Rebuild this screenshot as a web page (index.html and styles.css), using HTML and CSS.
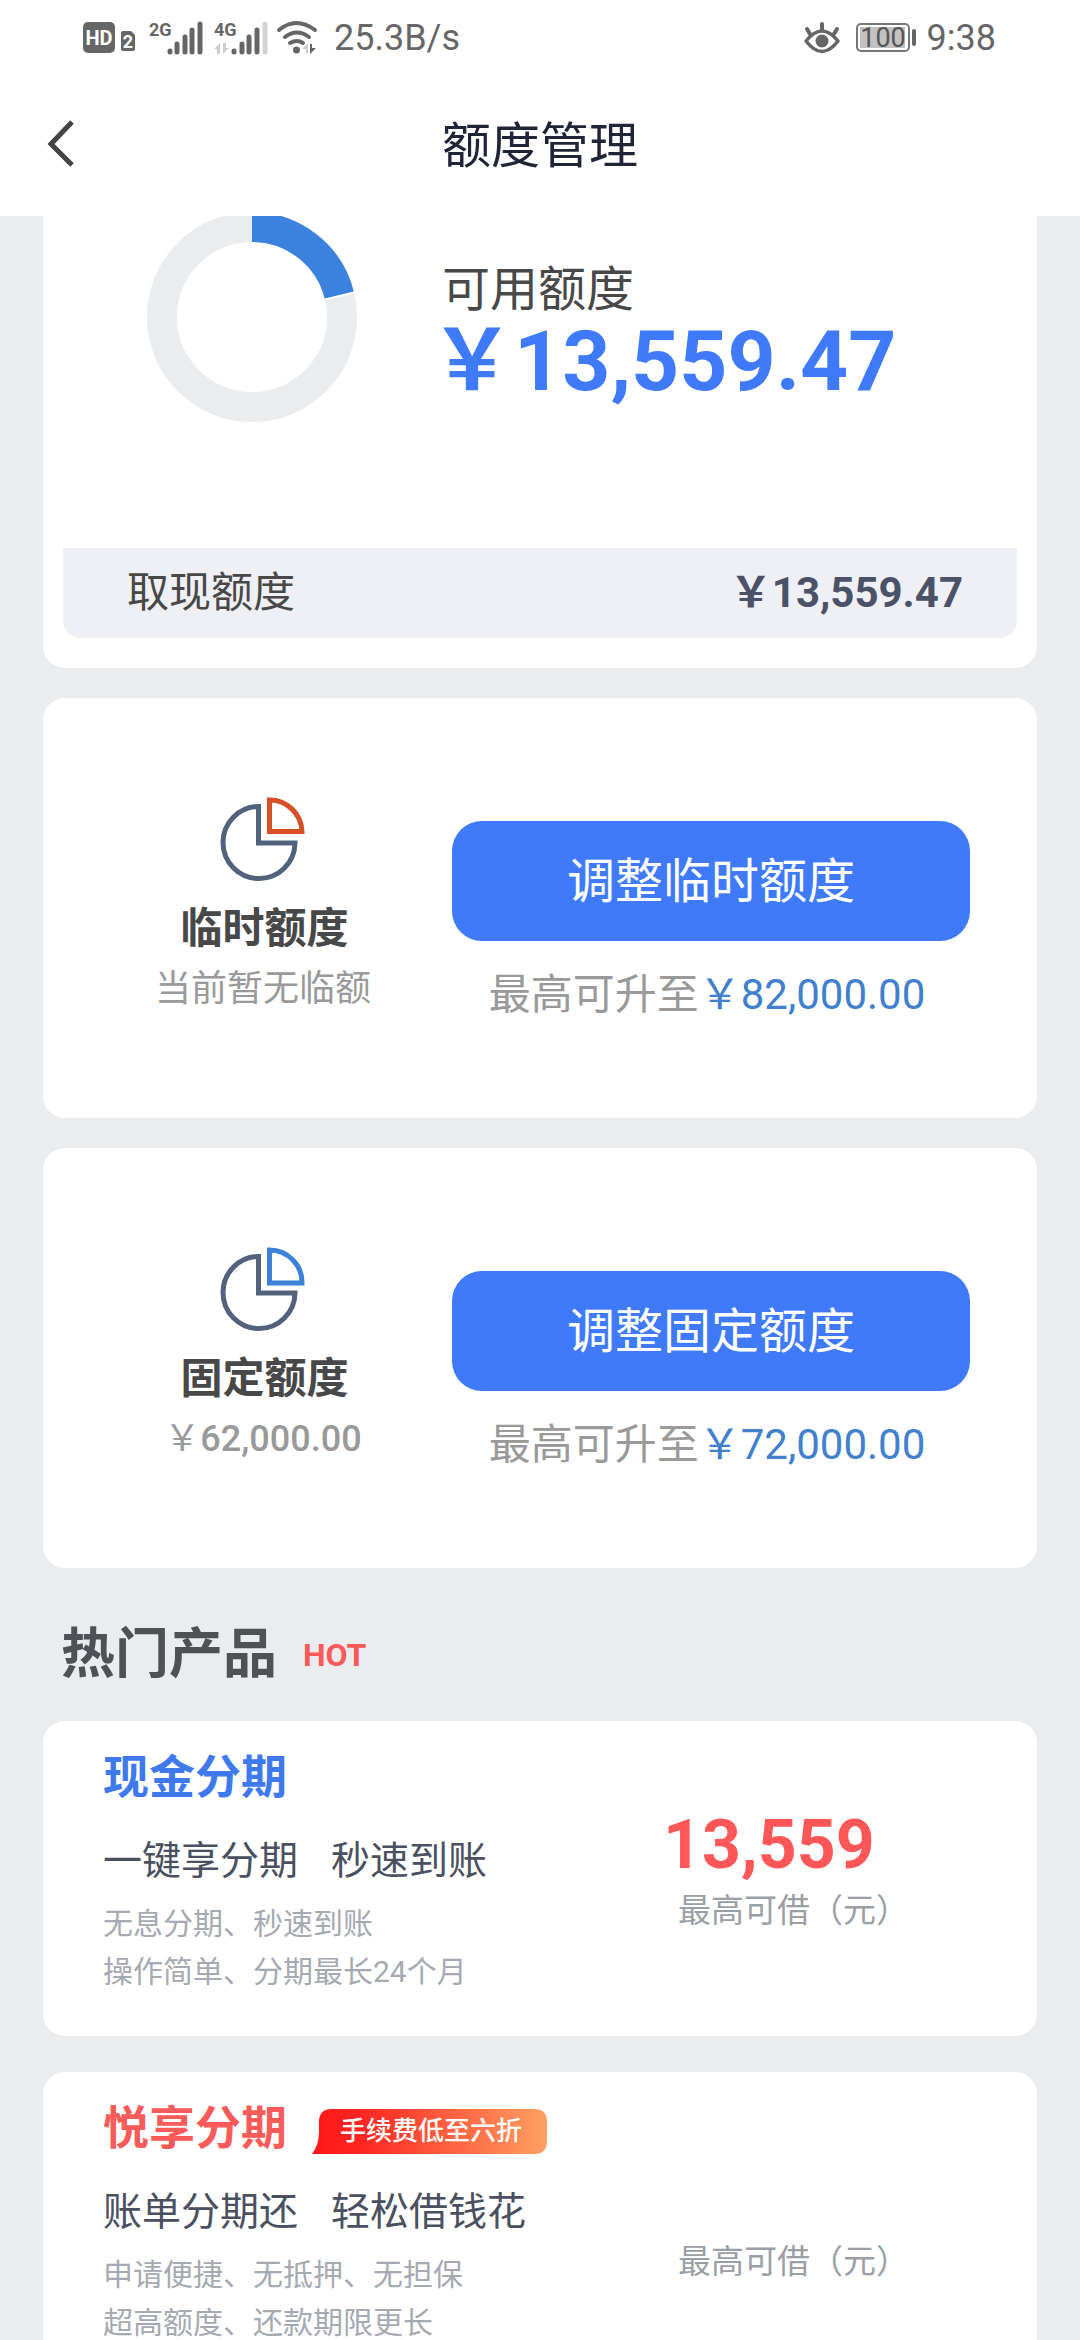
FILE: index.html
```html
<!DOCTYPE html>
<html lang="zh-CN">
<head>
<meta charset="utf-8">
<meta name="viewport" content="width=device-width, initial-scale=1">
<title>额度管理</title>
<link rel="stylesheet" href="styles.css">
</head>
<body>
<div class="app">
  <div class="status">
    <div class="status-left">
      <svg class="ic-hd" width="54" height="32" viewBox="0 0 54 32">
        <rect x="0" y="0" width="32" height="31" rx="5" fill="#666"/>
        <text x="16" y="23" text-anchor="middle" class="t-hd">HD</text>
        <path d="M38 11q0-2 2-2h8l4 4v14q0 2-2 2H40q-2 0-2-2z" fill="#666"/>
        <text x="45" y="26" text-anchor="middle" class="t-sim">2</text>
      </svg>
      <svg class="ic-sig" width="54" height="34" viewBox="0 0 54 34">
        <text x="0" y="15" class="t-net">2G</text>
        <g stroke="#666" stroke-width="5" stroke-linecap="round"><path d="M21 30v1M28 23v8M36 16v15M43 9v22M51 3v28"/></g>
      </svg>
      <svg class="ic-sig2" width="54" height="34" viewBox="0 0 54 34">
        <text x="0" y="15" class="t-net">4G</text>
        <path d="M0 28l6-6v11H3v-5zM15 27l-6 6V22h3v5z" fill="#ccc"/>
        <g stroke="#666" stroke-width="5" stroke-linecap="round"><path d="M20 30v1M28 23v8M35 16v15M43 9v22"/><path stroke="#d4d4d4" d="M51 3v28"/></g>
      </svg>
      <svg class="ic-wifi" width="40" height="34" viewBox="0 0 40 34">
        <g fill="none" stroke="#666" stroke-width="4" stroke-linecap="round"><path d="M2 9q17-14 36 0M8 16q12-9 24 0M13 22q7-4 13 0"/></g>
        <circle cx="19.500" cy="29" r="3.500" fill="#666"/>
        <path d="M25 28l6-6v10h-2v-4z" fill="#ccc"/><path d="M39 27l-6 6V23h2v4z" fill="#666"/>
      </svg>
      <span class="speed">25.3B/s</span>
    </div>
    <div class="status-right">
      <svg class="ic-eye" width="36" height="32" viewBox="0 0 36 32">
        <g fill="none" stroke="#666" stroke-linecap="round"><path stroke-width="3.500" d="M2 19Q18-1 34 19Q18 40 2 19z" stroke-linejoin="round"/><path stroke-width="4" d="M18 8V2M6 12L3 7M30 12l3-5"/></g>
        <circle cx="18" cy="19" r="6.500" fill="#666"/>
      </svg>
      <svg class="ic-bat" width="62" height="30" viewBox="0 0 62 30">
        <rect x="1" y="1" width="52" height="27" rx="4" fill="none" stroke="#777" stroke-width="2"/>
        <rect x="4" y="4" width="45" height="21" fill="#c2c2c2"/>
        <text x="27" y="24" text-anchor="middle" class="t-bat">100</text>
        <rect x="56" y="6" width="4" height="17" rx="2" fill="#666"/>
      </svg>
      <span class="clock">9:38</span>
    </div>
  </div>

  <header class="header">
    <button class="back" type="button" aria-label="返回">
      <svg width="30" height="50" viewBox="0 0 30 50"><path d="M26 3L5 25l21 21" fill="none" stroke="#444" stroke-width="5"/></svg>
    </button>
    <h1 class="title">额度管理</h1>
  </header>

  <main class="content">
    <section class="card summary">
      <div class="summary-main">
        <svg class="donut" width="210" height="210" viewBox="0 0 210 210">
          <circle cx="105" cy="105" r="90" fill="none" stroke="#ebeced" stroke-width="30"/>
          <path d="M105 15A90 90 0 0 1 192.400 83.700" fill="none" stroke="#3b82de" stroke-width="30"/>
          <path d="M177 87.800L208 80.200" stroke="#fff" stroke-width="2"/>
        </svg>
        <div class="available">
          <div class="available-label">可用额度</div>
          <div class="available-amount">￥13,559.47</div>
        </div>
      </div>
      <div class="cash-row">
        <span class="cash-label">取现额度</span>
        <span class="cash-amount">￥13,559.47</span>
      </div>
    </section>

    <section class="card quota">
      <div class="quota-info">
        <svg width="88" height="84" viewBox="0 0 88 84" fill="none" stroke-width="5">
          <path d="M37.500 9.500A36 36 0 1 0 74 46H37.500z" stroke="#53627c"/>
          <path d="M48.500 3v31.500H81A32.500 32.500 0 0 0 48.500 3z" stroke="#d84f27"/>
        </svg>
        <h2 class="quota-name">临时额度</h2>
        <div class="quota-value">当前暂无临额</div>
      </div>
      <div class="quota-action">
        <button class="adjust" type="button">调整临时额度</button>
        <div class="quota-max">最高可升至<span class="max-value">￥82,000.00</span></div>
      </div>
    </section>

    <section class="card quota">
      <div class="quota-info">
        <svg width="88" height="84" viewBox="0 0 88 84" fill="none" stroke-width="5">
          <path d="M37.500 9.500A36 36 0 1 0 74 46H37.500z" stroke="#53627c"/>
          <path d="M48.500 3v33H81A32.500 32.500 0 0 0 48.500 3z" stroke="#3b82d8"/>
        </svg>
        <h2 class="quota-name">固定额度</h2>
        <div class="quota-value">￥<span class="digits">62,000.00</span></div>
      </div>
      <div class="quota-action">
        <button class="adjust" type="button">调整固定额度</button>
        <div class="quota-max">最高可升至<span class="max-value">￥72,000.00</span></div>
      </div>
    </section>

    <div class="section-head">
      <h2 class="section-title">热门产品</h2>
      <span class="hot">HOT</span>
    </div>

    <section class="card product">
      <div class="product-info">
        <div class="product-head"><h3 class="product-name">现金分期</h3></div>
        <div class="product-sub"><span>一键享分期</span><span>秒速到账</span></div>
        <p class="product-desc">无息分期、秒速到账<br>操作简单、分期最长24个月</p>
      </div>
      <div class="loan">
        <div class="loan-amount">13,559</div>
        <div class="loan-label">最高可借（元）</div>
      </div>
    </section>

    <section class="card product">
      <div class="product-info">
        <div class="product-head">
          <h3 class="product-name red">悦享分期</h3>
          <span class="tag">
            <svg class="tag-shape" viewBox="0 0 235 46" preserveAspectRatio="none">
              <defs><linearGradient id="tagFill" x1="0" y1="0" x2="1" y2="0"><stop offset="0" stop-color="#ff1717"/><stop offset=".2" stop-color="#fe2520"/><stop offset="1" stop-color="#ffa163"/></linearGradient></defs>
              <path d="M0 46Q7 37 7 24V14Q7 1 20 1H222Q235 1 235 14V33Q235 46 222 46z" fill="url(#tagFill)"/>
            </svg>
            <span class="tag-text">手续费低至六折</span>
          </span>
        </div>
        <div class="product-sub"><span>账单分期还</span><span>轻松借钱花</span></div>
        <p class="product-desc">申请便捷、无抵押、无担保<br>超高额度、还款期限更长</p>
      </div>
      <div class="loan">
        <div class="loan-amount"></div>
        <div class="loan-label">最高可借（元）</div>
      </div>
    </section>
  </main>
</div>
</body>
</html>
```
FILE: styles.css
```css
* { box-sizing: border-box; }
body {
  margin: 0;
  background: #ebeced;
  color: #484848;
  font-family: Roboto, "Noto Sans CJK SC", sans-serif;
}
h1, h2, h3, p { margin: 0; }
button { padding: 0; border: 0; background: none; font: inherit; }
svg { display: block; flex: none; overflow: visible; }

.app { display: flex; flex-direction: column; height: 100vh; overflow: hidden; }

/* Status bar */
.status {
  display: flex;
  flex: none;
  justify-content: space-between;
  height: 72px;
  padding: 19px 84px 15px 83px;
  background: #fff;
  color: #666;
  font-size: 36px;
  line-height: 38px;
}
.status-left, .status-right { display: flex; align-items: center; }
.ic-sig { margin-left: 12px; }
.ic-sig2 { margin-left: 11px; }
.ic-wifi { margin-left: 9px; }
.speed { margin-left: 17px; }
.ic-bat { margin-left: 16px; }
.clock { margin-left: 9px; }
.t-hd { font: 700 20px Roboto, sans-serif; fill: #fff; }
.t-sim { font: 700 18px Roboto, sans-serif; fill: #fff; }
.t-net { font: 700 18px "Liberation Sans Narrow", Roboto, sans-serif; fill: #666; }
.t-bat { font: 400 27px Roboto, sans-serif; fill: #555; }

/* Page header */
.header {
  position: relative;
  display: flex;
  flex: none;
  align-items: center;
  justify-content: center;
  height: 144px;
  padding-top: 6px;
  background: #fff;
}
.back { position: absolute; left: 46px; top: 47px; }
.title { color: #1f2536; font-size: 49px; font-weight: 400; line-height: 72px; }

/* Cards */
.content {
  display: flex;
  flex: 1;
  flex-direction: column;
  gap: 30px;
  min-height: 0;
  padding: 0 43px;
  overflow: hidden;
}
.card { flex: none; border-radius: 22px; background: #fff; }

.summary { padding: 0 20px 30px; border-radius: 0 0 22px 22px; }
.summary-main { display: flex; gap: 73px; height: 332px; padding-left: 84px; }
.donut { margin-top: -4px; }
.available { padding-top: 44px; white-space: nowrap; }
.available-label { padding-left: 12px; font-size: 48px; line-height: 60px; }
.available-amount { color: #3e7afa; font-size: 84px; font-weight: 700; line-height: 84px; }
.cash-row {
  display: flex;
  align-items: center;
  justify-content: space-between;
  height: 90px;
  padding: 0 54px 10px 64px;
  border-radius: 0 0 18px 18px;
  background: #eff0f5;
  font-size: 42px;
}
.cash-amount { color: #4a5268; font-weight: 700; }

.quota {
  display: grid;
  grid-template-columns: 375px 1fr;
  min-height: 420px;
  padding: 99px 67px 0 34px;
}
.quota-info { display: flex; flex-direction: column; align-items: center; }
.quota-name { margin-top: 18px; font-size: 42px; font-weight: 700; line-height: 60px; }
.quota-value { padding-right: 3px; color: #999; font-size: 36px; line-height: 60px; }
.digits { font-weight: 500; }
.quota-action { padding-top: 24px; }
.adjust {
  display: block;
  width: 100%;
  height: 120px;
  padding-bottom: 8px;
  border-radius: 30px;
  background: #3e7afa;
  color: #fff;
  font-size: 48px;
}
.quota-max { margin-top: 24px; padding-right: 8px; color: #999; font-size: 42px; line-height: 60px; text-align: center; white-space: nowrap; }
.max-value { color: #4080cc; }

/* Products */
.section-head { display: flex; align-items: center; gap: 26px; height: 93px; padding: 20px 18px 0; }
.section-title { color: #505157; font-size: 54px; font-weight: 700; line-height: 75px; }
.hot { color: #fa5a5a; font-size: 32px; font-weight: 700; font-family: "Liberation Sans Narrow", Roboto, sans-serif; }

.product {
  display: flex;
  justify-content: space-between;
  min-height: 315px;
  padding: 26px 128px 20px 60px;
}
.product + .product { margin-top: 6px; }
.product-head { display: flex; align-items: center; gap: 25px; height: 60px; }
.product-name { color: #3f79ee; font-size: 46px; font-weight: 700; line-height: 60px; }
.product-name.red { color: #f95a5a; }
.product-sub { display: flex; gap: 33px; margin-top: 24px; color: #4a5060; font-size: 39px; line-height: 60px; }
.product-desc { margin-top: 9px; color: #a5a9b1; font-size: 30px; line-height: 48px; }
.tag { position: relative; margin-top: 6px; padding: 0 25px 0 28px; height: 46px; }
.tag-shape { position: absolute; left: 0; top: 0; width: 100%; height: 100%; }
.tag-text { position: relative; display: block; color: #fff; font-size: 26px; font-weight: 500; line-height: 46px; }
.loan { padding-top: 58px; }
.loan-amount { height: 82px; margin-left: -15px; color: #ff5757; font-size: 68px; font-weight: 700; line-height: 80px; }
.loan-label { color: #9a9fa6; font-size: 33px; line-height: 48px; }
```
